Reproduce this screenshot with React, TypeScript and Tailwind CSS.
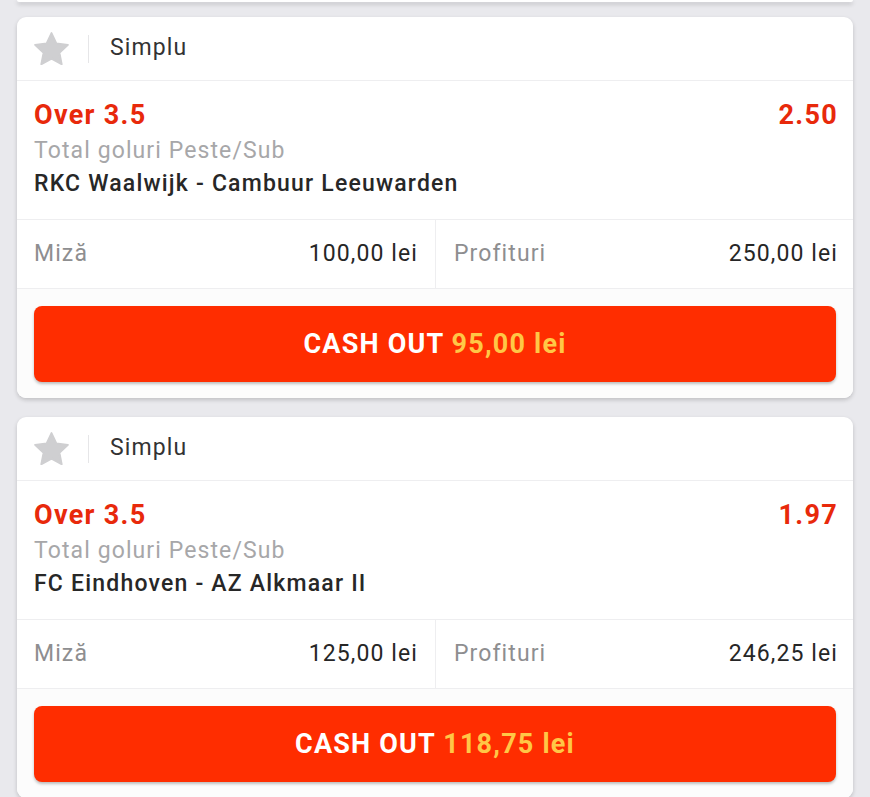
import React from "react";

type Bet = {
  odd: string;
  match: string;
  stake: string;
  profit: string;
  cash: string;
};

const bets: Bet[] = [
  { odd: "2.50", match: "RKC Waalwijk - Cambuur Leeuwarden", stake: "100,00 lei", profit: "250,00 lei", cash: "95,00 lei" },
  { odd: "1.97", match: "FC Eindhoven - AZ Alkmaar II", stake: "125,00 lei", profit: "246,25 lei", cash: "118,75 lei" },
];

function Star() {
  return (
    <svg width="35" height="33" viewBox="2 2 20 19">
      <path
        d="M12 2.6l2.85 6.05 6.6.75-4.9 4.55 1.3 6.6L12 17.3l-5.85 3.25 1.3-6.6-4.9-4.55 6.6-.75z"
        fill="#cfcfd1"
        stroke="#cfcfd1"
        strokeWidth="1.1"
        strokeLinejoin="round"
      />
    </svg>
  );
}

function Card({ b }: { b: Bet }) {
  return (
    <div className="bg-white rounded-[9px] shadow-[0_2px_4px_rgba(0,0,0,0.18)] overflow-hidden">
      <div className="h-[64px] flex items-center pl-[17px] border-b border-[#eeeef0]">
        <Star />
        <div className="w-px h-[28px] bg-[#e6e6e8] ml-[19px] mr-[21px]" />
        <span className="text-[23px] tracking-[1.1px] text-[#333]">Simplu</span>
      </div>
      <div className="pl-[17px] pr-[16px] pt-[17px] pb-[19px]">
        <div className="flex justify-between items-center h-[34px]">
          <span className="text-[27px] font-bold tracking-[1.3px] text-[#e8290b] leading-none">Over 3.5</span>
          <span className="text-[27px] font-bold tracking-[1.3px] text-[#e8290b] leading-none -mr-[1px]">{b.odd}</span>
        </div>
        <div className="text-[23px] tracking-[1.1px] text-[#a7a7a9] leading-[32px] mt-[3px]">Total goluri Peste/Sub</div>
        <div className="text-[23px] tracking-[1.2px] font-medium text-[#272727] leading-[32px] mt-[1px]">{b.match}</div>
      </div>
      <div className="flex h-[70px] border-t border-b border-[#eeeef0] text-[23px] tracking-[1.1px]">
        <div className="flex-1 flex items-center justify-between pl-[17px] pr-[17px] border-r border-[#eeeef0]">
          <span className="text-[#8e8e90]">Miză</span>
          <span className="text-[#262626]">{b.stake}</span>
        </div>
        <div className="flex-1 flex items-center justify-between pl-[18px] pr-[15px]">
          <span className="text-[#8e8e90]">Profituri</span>
          <span className="text-[#262626]">{b.profit}</span>
        </div>
      </div>
      <div className="px-[17px] pt-[17px] pb-[16px] bg-[#fcfcfc]">
        <div className="h-[76px] rounded-[8px] bg-[#ff2d00] flex items-center justify-center shadow-[0_2px_3px_rgba(0,0,0,0.25)]">
          <span className="text-[27px] font-bold text-white tracking-[1.2px]">
            CASH OUT <span className="text-[#ffc746]">{b.cash}</span>
          </span>
        </div>
      </div>
    </div>
  );
}

export default function App() {
  return (
    <div
      className="w-[870px] h-[797px] overflow-hidden bg-[#e9e9ed] px-[17px]"
      style={{ fontFamily: "Roboto, 'Noto Sans', sans-serif" }}
    >
      <div className="h-[2px] bg-white rounded-b-[9px] shadow-[0_2px_4px_rgba(0,0,0,0.25)]" />
      <div className="flex flex-col gap-[19px] pt-[15px]">
        {bets.map((b, i) => (
          <Card key={i} b={b} />
        ))}
      </div>
    </div>
  );
}
